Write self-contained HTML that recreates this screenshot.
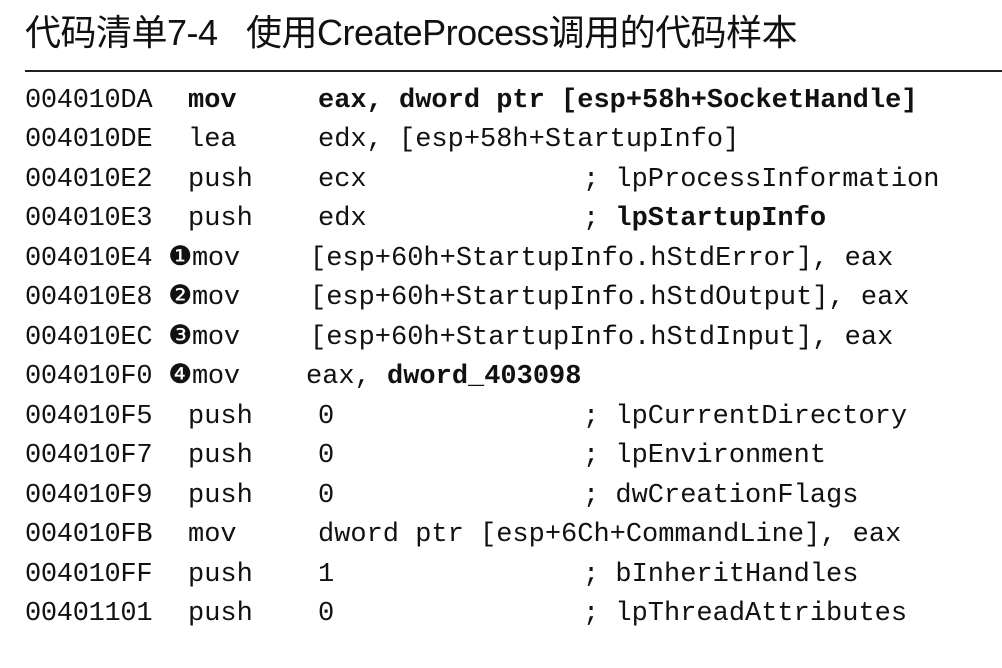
<!DOCTYPE html>
<html><head><meta charset="utf-8"><style>
body{margin:0;width:1002px;height:668px;background:#fff;overflow:hidden;position:relative;color:#111}
.t{position:absolute;left:25px;top:4px;font:36px "Liberation Sans","Noto Sans CJK SC",sans-serif;white-space:pre;letter-spacing:-0.5px}
.hr{position:absolute;left:25px;right:0;top:70px;height:2px;background:#222}
.r{position:absolute;left:0;height:40px;font:27px "Liberation Mono",monospace;white-space:pre;line-height:40px}
.r span{position:absolute;top:0}
.a{left:25px;letter-spacing:-0.3px}.m{left:188px}.o{left:318px}.c{left:583px}
b{font-weight:bold}
</style></head><body>
<div class="t">代码清单7-4   使用CreateProcess调用的代码样本</div>
<div class="hr"></div>
<div class="r" style="top:81px"><span class="a">004010DA</span><span class="m"><b>mov</b></span><span class="o"><b>eax, dword ptr [esp+58h+SocketHandle]</b></span></div>
<div class="r" style="top:120px"><span class="a">004010DE</span><span class="m">lea</span><span class="o">edx, [esp+58h+StartupInfo]</span></div>
<div class="r" style="top:160px"><span class="a">004010E2</span><span class="m">push</span><span class="o">ecx</span><span class="c">; lpProcessInformation</span></div>
<div class="r" style="top:199px"><span class="a">004010E3</span><span class="m">push</span><span class="o">edx</span><span class="c">; <b>lpStartupInfo</b></span></div>
<div class="r" style="top:239px"><span class="a">004010E4 ❶mov</span><span class="o" style="left:310px">[esp+60h+StartupInfo.hStdError], eax</span></div>
<div class="r" style="top:278px"><span class="a">004010E8 ❷mov</span><span class="o" style="left:310px">[esp+60h+StartupInfo.hStdOutput], eax</span></div>
<div class="r" style="top:318px"><span class="a">004010EC ❸mov</span><span class="o" style="left:310px">[esp+60h+StartupInfo.hStdInput], eax</span></div>
<div class="r" style="top:357px"><span class="a">004010F0 ❹mov</span><span class="o" style="left:306px">eax, <b>dword_403098</b></span></div>
<div class="r" style="top:397px"><span class="a">004010F5</span><span class="m">push</span><span class="o">0</span><span class="c">; lpCurrentDirectory</span></div>
<div class="r" style="top:436px"><span class="a">004010F7</span><span class="m">push</span><span class="o">0</span><span class="c">; lpEnvironment</span></div>
<div class="r" style="top:476px"><span class="a">004010F9</span><span class="m">push</span><span class="o">0</span><span class="c">; dwCreationFlags</span></div>
<div class="r" style="top:515px"><span class="a">004010FB</span><span class="m">mov</span><span class="o">dword ptr [esp+6Ch+CommandLine], eax</span></div>
<div class="r" style="top:555px"><span class="a">004010FF</span><span class="m">push</span><span class="o">1</span><span class="c">; bInheritHandles</span></div>
<div class="r" style="top:594px"><span class="a">00401101</span><span class="m">push</span><span class="o">0</span><span class="c">; lpThreadAttributes</span></div>
</body></html>
